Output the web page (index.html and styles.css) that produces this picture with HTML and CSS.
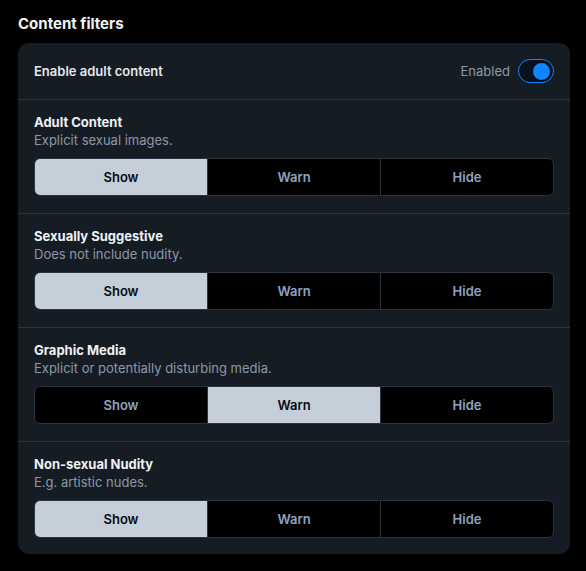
FILE: index.html
```html
<!DOCTYPE html>
<html>
<head>
<meta charset="utf-8">
<link rel="stylesheet" href="styles.css">
</head>
<body>
<div class="page">
  <h2 class="heading">Content filters</h2>
  <div class="card">
    <div class="row header">
      <div class="label">Enable adult content</div>
      <div class="toggle-wrap">
        <span class="toggle-text">Enabled</span>
        <span class="toggle"><span class="knob"></span></span>
      </div>
    </div>
    <div class="row section">
      <div class="title">Adult Content</div>
      <div class="desc">Explicit sexual images.</div>
      <div class="seg">
        <div class="opt active">Show</div>
        <div class="opt">Warn</div>
        <div class="opt">Hide</div>
      </div>
    </div>
    <div class="row section">
      <div class="title">Sexually Suggestive</div>
      <div class="desc">Does not include nudity.</div>
      <div class="seg">
        <div class="opt active">Show</div>
        <div class="opt">Warn</div>
        <div class="opt">Hide</div>
      </div>
    </div>
    <div class="row section">
      <div class="title">Graphic Media</div>
      <div class="desc">Explicit or potentially disturbing media.</div>
      <div class="seg">
        <div class="opt">Show</div>
        <div class="opt active">Warn</div>
        <div class="opt">Hide</div>
      </div>
    </div>
    <div class="row section last">
      <div class="title">Non-sexual Nudity</div>
      <div class="desc">E.g. artistic nudes.</div>
      <div class="seg">
        <div class="opt active">Show</div>
        <div class="opt">Warn</div>
        <div class="opt">Hide</div>
      </div>
    </div>
  </div>
</div>
</body>
</html>
```

FILE: styles.css
```css
* { box-sizing: border-box; }
html, body {
  margin: 0;
  padding: 0;
  background: #000;
}
body {
  font-family: Inter, "Noto Sans", sans-serif;
  color: #f1f3f5;
}
.page {
  padding: 14px 16px 0 18px;
}
.heading {
  margin: 0 0 9px 0;
  font-size: 15px;
  font-weight: 700;
  line-height: 20px;
  color: #f1f3f5;
}
.card {
  width: 552px;
  background: #161c24;
  border-radius: 11px;
  overflow: hidden;
}
.row + .row {
  border-top: 1px solid #2b333e;
}
.header {
  height: 56px;
  display: flex;
  align-items: center;
  justify-content: space-between;
  padding: 0 16px;
}
.label {
  font-size: 13px;
  font-weight: 600;
  color: #e3e8ee;
}
.toggle-wrap {
  display: flex;
  align-items: center;
  gap: 8px;
}
.toggle-text {
  font-size: 13px;
  color: #8d98a6;
}
.toggle {
  width: 36px;
  height: 24px;
  border-radius: 12px;
  border: 1.5px solid #1083fe;
  background: #09111e;
  display: flex;
  align-items: center;
  justify-content: flex-end;
  padding-right: 3px;
}
.knob {
  width: 17px;
  height: 17px;
  border-radius: 50%;
  background: #1083fe;
}
.section {
  padding: 13px 16px 17px 16px;
}
.section.last {
  padding-bottom: 16px;
}
.title {
  font-size: 13px;
  font-weight: 700;
  line-height: 18px;
  color: #eef1f4;
}
.desc {
  font-size: 13px;
  line-height: 19px;
  color: #8d98a6;
  margin-bottom: 8px;
}
.seg {
  display: flex;
  height: 38px;
  border: 1px solid #2b333e;
  border-radius: 6px;
  overflow: hidden;
  background: #000;
}
.opt {
  flex: 1;
  display: flex;
  align-items: center;
  justify-content: center;
  font-size: 13px;
  font-weight: 600;
  color: #8ea3c2;
}
.opt + .opt {
  border-left: 1px solid #2b333e;
}
.opt.active {
  background: #c5cfd9;
  color: #0a0c10;
}
```
